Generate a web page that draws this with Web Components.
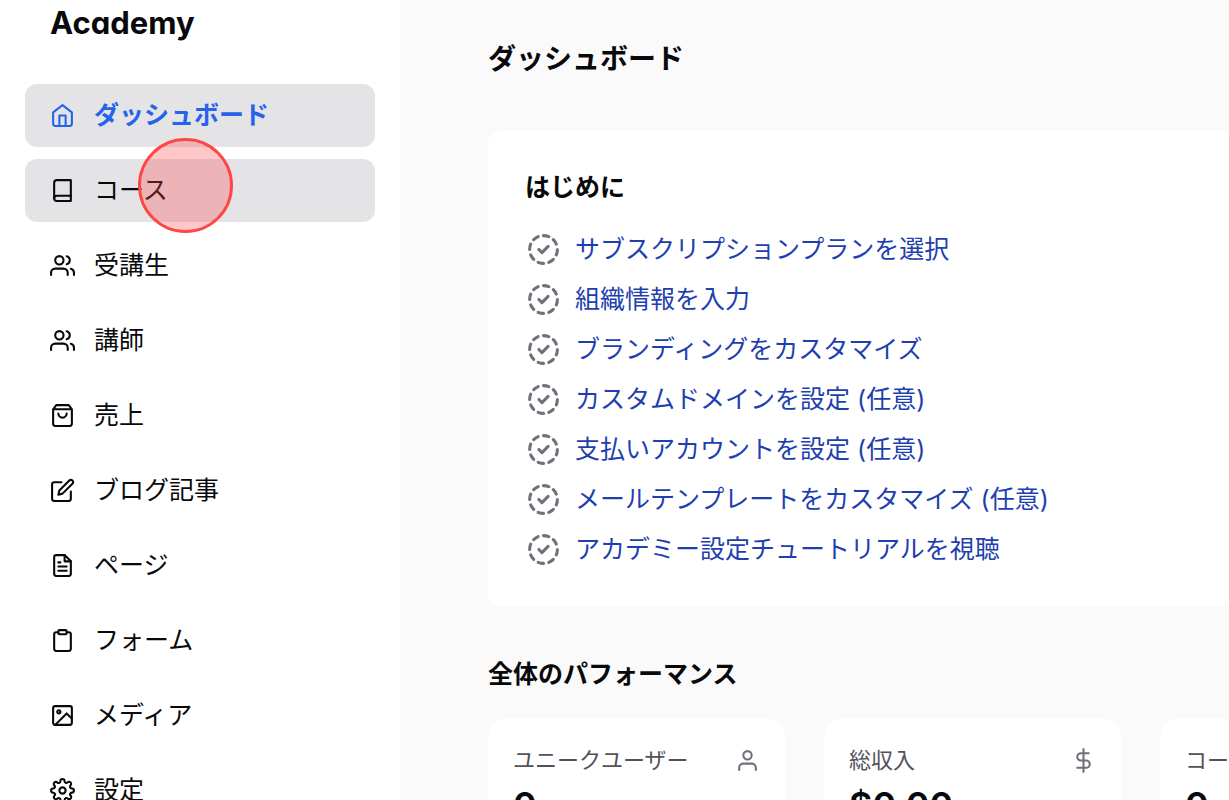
<!DOCTYPE html>
<html lang="ja">
<head>
<meta charset="utf-8">
<meta name="viewport" content="width=device-width, initial-scale=1">
<title>Academy</title>
<style>
  html, body {
    margin: 0;
    height: 100%;
  }

  body {
    overflow: hidden;
    color: #09090b;
    background: #fafafa;
    font: 400 25px/38px Inter, "Noto Sans CJK JP", sans-serif;
    font-feature-settings: "cv11";
  }
</style>
</head>
<body>
<academy-app></academy-app>

<script>
const ICONS = {
  home: '<path d="m3 9 9-7 9 7v11a2 2 0 0 1-2 2H5a2 2 0 0 1-2-2z"/><path d="M9 22V12h6v10"/>',
  book: '<path d="M4 19.5A2.5 2.5 0 0 1 6.5 17H20"/><path d="M6.5 2H20v20H6.5A2.5 2.5 0 0 1 4 19.5v-15A2.5 2.5 0 0 1 6.5 2z"/>',
  users: '<path d="M17 21v-2a4 4 0 0 0-4-4H5a4 4 0 0 0-4 4v2"/><circle cx="9" cy="7" r="4"/><path d="M23 21v-2a4 4 0 0 0-3-3.87M16 3.13a4 4 0 0 1 0 7.75"/>',
  bag: '<path d="M6 2 3 6v14a2 2 0 0 0 2 2h14a2 2 0 0 0 2-2V6l-3-4zM3 6h18M16 10a4 4 0 0 1-8 0"/>',
  edit: '<path d="M11 4H4a2 2 0 0 0-2 2v14a2 2 0 0 0 2 2h14a2 2 0 0 0 2-2v-7"/><path d="M18.5 2.5a2.12 2.12 0 0 1 3 3L12 15l-4 1 1-4z"/>',
  page: '<path d="M14 2H6a2 2 0 0 0-2 2v16a2 2 0 0 0 2 2h12a2 2 0 0 0 2-2V8z"/><path d="M14 2v6h6M16 13H8M16 17H8M10 9H8"/>',
  form: '<path d="M16 4h2a2 2 0 0 1 2 2v14a2 2 0 0 1-2 2H6a2 2 0 0 1-2-2V6a2 2 0 0 1 2-2h2"/><rect x="8" y="2" width="8" height="4" rx="1"/>',
  media: '<rect x="3" y="3" width="18" height="18" rx="2"/><circle cx="8.5" cy="8.5" r="1.5"/><path d="m21 15-5-5L5 21"/>',
  gear: '<circle cx="12" cy="12" r="3"/><path d="M19.4 15a1.65 1.65 0 0 0 .33 1.82l.06.06a2 2 0 0 1 0 2.83 2 2 0 0 1-2.83 0l-.06-.06a1.65 1.65 0 0 0-1.82-.33 1.65 1.65 0 0 0-1 1.51V21a2 2 0 0 1-2 2 2 2 0 0 1-2-2v-.09A1.65 1.65 0 0 0 9 19.4a1.65 1.65 0 0 0-1.82.33l-.06.06a2 2 0 0 1-2.83 0 2 2 0 0 1 0-2.83l.06-.06a1.65 1.65 0 0 0 .33-1.82 1.65 1.65 0 0 0-1.51-1H3a2 2 0 0 1-2-2 2 2 0 0 1 2-2h.09A1.65 1.65 0 0 0 4.6 9a1.65 1.65 0 0 0-.33-1.82l-.06-.06a2 2 0 0 1 0-2.83 2 2 0 0 1 2.83 0l.06.06a1.65 1.65 0 0 0 1.82.33H9a1.65 1.65 0 0 0 1-1.51V3a2 2 0 0 1 2-2 2 2 0 0 1 2 2v.09a1.65 1.65 0 0 0 1 1.51 1.65 1.65 0 0 0 1.82-.33l.06-.06a2 2 0 0 1 2.83 0 2 2 0 0 1 0 2.83l-.06.06a1.65 1.65 0 0 0-.33 1.82V9a1.65 1.65 0 0 0 1.51 1H21a2 2 0 0 1 2 2 2 2 0 0 1-2 2h-.09a1.65 1.65 0 0 0-1.51 1z"/>',
  user: '<path d="M20 21v-2a4 4 0 0 0-4-4H8a4 4 0 0 0-4 4v2"/><circle cx="12" cy="7" r="4"/>',
  dollar: '<path d="M12 1v22M17 5H9.5a3.5 3.5 0 0 0 0 7h5a3.5 3.5 0 0 1 0 7H6"/>',
  todo: '<path d="M8.56 3.69a9 9 0 0 0-2.92 1.95M3.69 8.56A9 9 0 0 0 3 12M3.69 15.44a9 9 0 0 0 1.95 2.92M8.56 20.31A9 9 0 0 0 12 21M15.44 20.31a9 9 0 0 0 2.92-1.95M20.31 15.44A9 9 0 0 0 21 12M20.31 8.56a9 9 0 0 0-1.95-2.92M15.44 3.69A9 9 0 0 0 12 3M9 12l2 2 4-4"/>'
};

class AppIcon extends HTMLElement {
  connectedCallback() {
    this.attachShadow({ mode: "open" }).innerHTML = `
      <style>
        :host { display: block; flex: none; width: 25px; height: 25px; }
        svg {
          display: block;
          width: 100%;
          height: 100%;
          fill: none;
          stroke: currentColor;
          stroke-width: 2;
          stroke-linecap: round;
          stroke-linejoin: round;
        }
      </style>
      <svg viewBox="0 0 24 24" aria-hidden="true">${ICONS[this.getAttribute("name")] || ""}</svg>
    `;
  }
}

class NavItem extends HTMLElement {
  connectedCallback() {
    this.attachShadow({ mode: "open" }).innerHTML = `
      <style>
        :host { display: block; }
        a {
          display: flex;
          align-items: center;
          gap: 19px;
          height: 63px;
          padding: 0 25px;
          border-radius: 12px;
          color: inherit;
          text-decoration: none;
        }
        span { padding-bottom: 2px; }
        :host([hovered]) a, :host([active]) a, a:hover { background: #e4e4e7; }
        :host([active]) a { color: #2563eb; font-weight: 700; }
      </style>
      <a href="#"><app-icon name="${this.getAttribute("icon")}"></app-icon><span><slot></slot></span></a>
    `;
  }
}

class SideBar extends HTMLElement {
  connectedCallback() {
    this.attachShadow({ mode: "open" }).innerHTML = `
      <style>
        :host { display: block; flex: none; box-sizing: border-box; width: 400px; padding: 0 25px; background: #fff; }
        .brand { padding: 4px 25px 42px; font-size: 31px; font-weight: 700; }
        nav { display: flex; flex-direction: column; gap: 12px; }
      </style>
      <div class="brand">Academy</div>
      <nav><slot></slot></nav>
    `;
  }
}

class TodoItem extends HTMLElement {
  connectedCallback() {
    this.attachShadow({ mode: "open" }).innerHTML = `
      <style>
        :host { display: flex; align-items: center; gap: 13px; height: 38px; }
        app-icon { width: 37px; height: 37px; color: #71717a; }
        a { color: #1e40af; text-decoration: none; }
      </style>
      <app-icon name="todo"></app-icon>
      <a href="#"><slot></slot></a>
    `;
  }
}

class TodoCard extends HTMLElement {
  connectedCallback() {
    this.attachShadow({ mode: "open" }).innerHTML = `
      <style>
        :host { display: block; padding: 37px 37px 38px; border-radius: 12px; background: #fff; }
        h2 { margin: 0 0 24px; font-size: 25px; font-weight: 600; }
        .list { display: flex; flex-direction: column; gap: 12px; }
      </style>
      <h2>${this.getAttribute("heading")}</h2>
      <div class="list"><slot></slot></div>
    `;
  }
}

class StatCard extends HTMLElement {
  connectedCallback() {
    this.attachShadow({ mode: "open" }).innerHTML = `
      <style>
        :host { display: block; padding: 25px; border-radius: 18px; background: #fff; }
        .top { display: flex; align-items: center; justify-content: space-between; height: 32px; }
        .label { font-size: 22px; white-space: nowrap; color: #52525b; }
        app-icon { color: #71717a; }
        .value { margin-top: 4px; font-size: 36px; line-height: 50px; font-weight: 600; }
      </style>
      <div class="top">
        <span class="label">${this.getAttribute("label")}</span>
        <app-icon name="${this.getAttribute("icon")}"></app-icon>
      </div>
      <div class="value"><slot></slot></div>
    `;
  }
}

// marks the spot that is being clicked
class ClickMarker extends HTMLElement {
  connectedCallback() {
    this.attachShadow({ mode: "open" }).innerHTML = `
      <style>
        :host {
          position: absolute;
          left: 138px;
          top: 138px;
          box-sizing: border-box;
          width: 95px;
          height: 95px;
          border: 3px solid #ff4646;
          border-radius: 50%;
          background: rgba(255, 70, 70, 0.3);
          background-clip: padding-box;
          pointer-events: none;
        }
      </style>
    `;
  }
}

class AcademyApp extends HTMLElement {
  connectedCallback() {
    this.attachShadow({ mode: "open" }).innerHTML = `
      <style>
        :host { display: flex; height: 100%; overflow: hidden; }
        main { flex: 1; min-width: 0; padding: 40px 0 0 88px; }
        h1 { margin: 0 0 53px; font-size: 28px; line-height: 38px; font-weight: 600; }
        h2 { margin: 49px 0 26px; font-size: 25px; font-weight: 600; }
        todo-card { margin-right: -24px; }
        .stats { display: grid; grid-auto-flow: column; grid-auto-columns: 297px; gap: 39px; }
      </style>
      <side-bar>
        <nav-item icon="home" active>ダッシュボード</nav-item>
        <nav-item icon="book" hovered>コース</nav-item>
        <nav-item icon="users">受講生</nav-item>
        <nav-item icon="users">講師</nav-item>
        <nav-item icon="bag">売上</nav-item>
        <nav-item icon="edit">ブログ記事</nav-item>
        <nav-item icon="page">ページ</nav-item>
        <nav-item icon="form">フォーム</nav-item>
        <nav-item icon="media">メディア</nav-item>
        <nav-item icon="gear">設定</nav-item>
      </side-bar>
      <main>
        <h1>ダッシュボード</h1>
        <todo-card heading="はじめに">
          <todo-item>サブスクリプションプランを選択</todo-item>
          <todo-item>組織情報を入力</todo-item>
          <todo-item>ブランディングをカスタマイズ</todo-item>
          <todo-item>カスタムドメインを設定 (任意)</todo-item>
          <todo-item>支払いアカウントを設定 (任意)</todo-item>
          <todo-item>メールテンプレートをカスタマイズ (任意)</todo-item>
          <todo-item>アカデミー設定チュートリアルを視聴</todo-item>
        </todo-card>
        <h2>全体のパフォーマンス</h2>
        <div class="stats">
          <stat-card label="ユニークユーザー" icon="user">0</stat-card>
          <stat-card label="総収入" icon="dollar">$0.00</stat-card>
          <stat-card label="コース" icon="book">0</stat-card>
        </div>
      </main>
      <click-marker></click-marker>
    `;
  }
}

customElements.define("app-icon", AppIcon);
customElements.define("nav-item", NavItem);
customElements.define("side-bar", SideBar);
customElements.define("todo-item", TodoItem);
customElements.define("todo-card", TodoCard);
customElements.define("stat-card", StatCard);
customElements.define("click-marker", ClickMarker);
customElements.define("academy-app", AcademyApp);
</script>
</body>
</html>
